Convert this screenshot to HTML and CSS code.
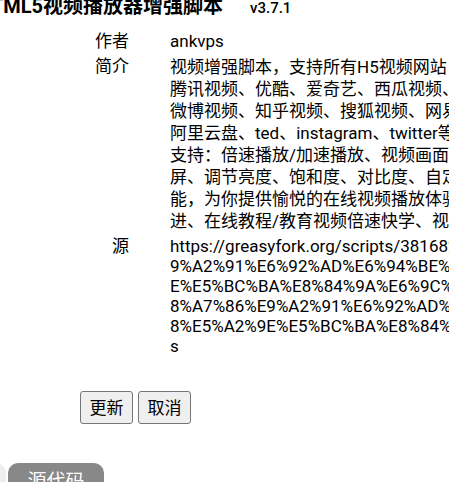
FILE: index.html
```html
<!DOCTYPE html>
<html lang="zh-CN">
<head>
<meta charset="utf-8">
<title>HTML5视频播放器增强脚本</title>
<link rel="stylesheet" href="styles.css">
</head>
<body>
<header class="heading">
  <h1 class="name">HTML5视频播放器增强脚本</h1>
  <span class="version">v3.7.1</span>
</header>
<main>
  <dl class="info">
    <dt>作者</dt>
    <dd>ankvps</dd>
    <dt>简介</dt>
    <dd class="description">视频增强脚本，支持所有H5视频网站<br>腾讯视频、优酷、爱奇艺、西瓜视频、<br>微博视频、知乎视频、搜狐视频、网易<br>阿里云盘、ted、instagram、twitter等<br>支持：倍速播放/加速播放、视频画面<br>屏、调节亮度、饱和度、对比度、自定<br>能，为你提供愉悦的在线视频播放体验<br>进、在线教程/教育视频倍速快学、视</dd>
    <dt>源</dt>
    <dd class="source">https://greasyfork.org/scripts/381682<br>9%A2%91%E6%92%AD%E6%94%BE%E<br>E%E5%BC%BA%E8%84%9A%E6%9C%A<br>8%A7%86%E9%A2%91%E6%92%AD%E<br>8%E5%A2%9E%E5%BC%BA%E8%84%9<br>s</dd>
  </dl>
  <div class="actions">
    <button type="button" class="action">更新</button>
    <button type="button" class="action">取消</button>
  </div>
</main>
<nav class="tabs">
  <button type="button" class="tab" aria-label="设置"></button>
  <button type="button" class="tab tab-active">源代码</button>
</nav>
</body>
</html>
```
FILE: styles.css
```css
* {
  box-sizing: border-box;
}

html {
  overflow: hidden;
}

body {
  margin: 0;
  height: 100vh;
  overflow: hidden;
  background: #fff;
  color: #000;
  font: 17px/22px Roboto, "Noto Sans CJK SC", sans-serif;
  white-space: nowrap;
}

.heading {
  display: flex;
  align-items: baseline;
  gap: 27px;
  margin: -9px 0 0 -23px;
}

.name {
  margin: 0;
  font-size: 20px;
  line-height: 30px;
  font-weight: 700;
}

.version {
  font-size: 15px;
  font-weight: 500;
}

.info {
  display: grid;
  grid-template-columns: 129px 1fr;
  column-gap: 41px;
  row-gap: 3px;
  margin: 9px 0 0;
}

.info dt {
  text-align: right;
}

.info dd {
  margin: 0;
}

.description {
  padding-top: 1px;
}

.source {
  padding-top: 1px;
  line-height: 20px;
}

.actions {
  display: flex;
  gap: 5px;
  margin: 35px 0 0 80px;
}

.action {
  height: 33px;
  min-width: 53px;
  padding: 0 8px;
  border: 1px solid #767676;
  border-radius: 3px;
  background: #efefef;
  color: #000;
  font: inherit;
}

.tabs {
  display: flex;
  gap: 2px;
  margin: 39px 0 0 -90px;
}

.tab {
  width: 96px;
  height: 38px;
  padding: 0;
  border: 0;
  border-radius: 10px 10px 0 0;
  background: #eee;
  color: #fff;
  font: 19px/38px Roboto, "Noto Sans CJK SC", sans-serif;
}

.tab-active {
  background: #888;
}
```
